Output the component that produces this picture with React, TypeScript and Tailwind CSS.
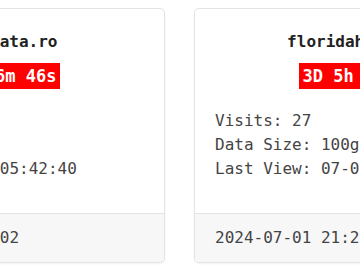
const cards = [
  {
    site: "www.bigdata.ro",
    uptime: "1D 3h 16m 46s",
    visits: 14,
    size: "20gb",
    lastView: "07-01 05:42:40",
    updated: "2024-07-01 05:42:02",
  },
  {
    site: "floridahouses.com",
    uptime: "3D 5h 42m 09s",
    visits: 27,
    size: "100gb",
    lastView: "07-01 21:25:13",
    updated: "2024-07-01 21:25:51",
  },
];

function SiteCard({ card }: { card: (typeof cards)[number] }) {
  return (
    <div className="flex w-[350px] shrink-0 flex-col overflow-hidden rounded-[5px] border border-[#e3e3e3] bg-white shadow-[0_1px_2px_rgba(0,0,0,0.05)]">
      <div className="flex flex-col px-5 pt-[21px] pb-[32px]">
        <h3 className="text-center text-[16px] leading-[24px] font-bold text-[#222]">
          {card.site}
        </h3>
        <div className="mt-[9px] flex justify-center">
          <span className="bg-[#f00] px-[3px] text-[17px] leading-[26px] font-bold text-white">
            {card.uptime}
          </span>
        </div>
        <div className="mt-[20px] flex flex-col text-[16px] leading-[24px] text-[#444]">
          <span>Visits: {card.visits}</span>
          <span>Data Size: {card.size}</span>
          <span>Last View: {card.lastView}</span>
        </div>
      </div>
      <div className="border-t border-[#e3e3e3] bg-[#f7f7f7] px-5 py-3 text-[16px] leading-[24px] text-[#444]">
        {card.updated}
      </div>
    </div>
  );
}

export default function App() {
  return (
    <div className="h-[270px] w-[360px] overflow-hidden bg-white font-['DejaVu_Sans_Mono',monospace]">
      <div className="ml-[-185px] flex gap-[29px] pt-2">
        {cards.map((c) => (
          <SiteCard key={c.site} card={c} />
        ))}
      </div>
    </div>
  );
}
